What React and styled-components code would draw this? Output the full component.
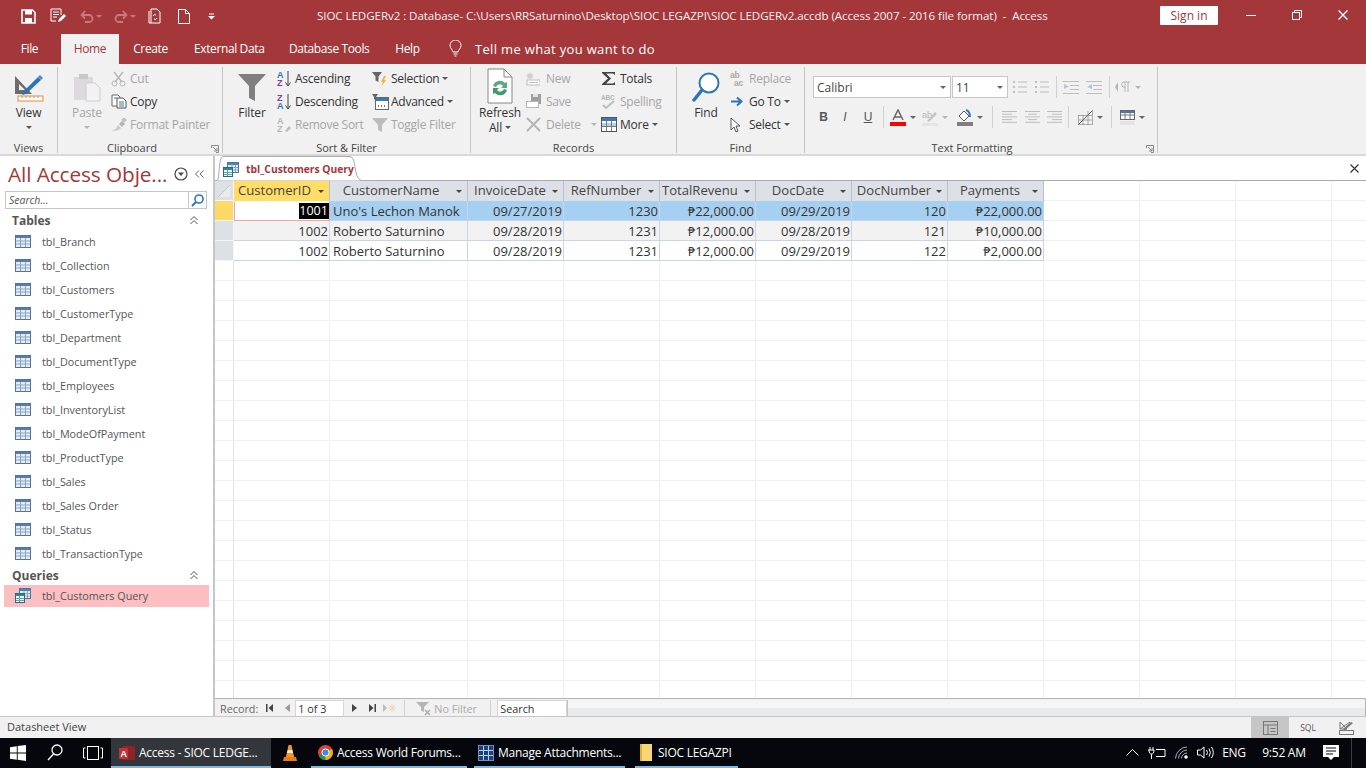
import React from 'react';
import styled, { createGlobalStyle } from 'styled-components';

const FONT = '"Open Sans", "Noto Sans", "Liberation Sans", sans-serif';
const RED = '#a4373a';

const Global = createGlobalStyle`
  html, body { margin: 0; padding: 0; background: #fff; }
  body { font-family: ${FONT}; font-size: 12px; color: #333; }
  * { box-sizing: border-box; }
  svg { display: block; flex: none; }
`;

const Page = styled.div`
  width: 1366px; height: 768px; overflow: hidden;
  display: flex; flex-direction: column;
`;

/* ---------- title bar ---------- */
const TitleBar = styled.div`
  height: 34px; background: ${RED}; color: #fff;
  display: flex; align-items: center; flex: none;
  padding-left: 21px;
`;
const QatSlot = styled.div`
  width: ${p => p.$w}px; display: flex; align-items: center; gap: 2px;
  padding-bottom: 2px;
`;
const TitleText = styled.div`
  width: 730px; margin-left: 99px; white-space: pre; font-size: 11.6px;
  padding-bottom: 3px; color: #f8eeee; letter-spacing: -0.08px;
`;
const SignIn = styled.div`
  width: 58px; height: 19px; margin-left: 113px; margin-bottom: 4px; background: #fff; color: ${RED};
  border-radius: 1px; font-size: 12px; text-align: center; line-height: 19px;
`;
const WinBtn = styled.div`
  width: 46px; display: flex; justify-content: center; padding-bottom: 4px;
  margin-left: ${p => p.$ml || 0}px;
`;

/* ---------- ribbon tabs ---------- */
const TabBar = styled.div`
  height: 30px; background: ${RED}; flex: none; display: flex; align-items: stretch;
  padding-left: 20px;
`;
const Tab = styled.div`
  width: ${p => p.$w}px; margin-left: ${p => p.$ml || 0}px;
  background: ${p => p.$active ? '#f1f1f1' : 'transparent'};
  color: ${p => p.$active ? RED : '#fff'};
  text-align: center; line-height: 29px; font-size: 12px; white-space: nowrap; letter-spacing: -0.38px;
`;
const TellMe = styled.div`
  display: flex; align-items: center; gap: 13px; margin-left: 29px; color: #fff; font-size: 13px;
  padding-bottom: 1px; letter-spacing: 0.33px;
`;

/* ---------- ribbon ---------- */
const Ribbon = styled.div`
  height: 92px; background: #f1f1f1; border-bottom: 2px solid #d8d8d8; flex: none;
  display: flex; padding-top: 3px;
`;
const Group = styled.div`
  width: ${p => p.$w}px; height: 86px; position: relative;
  border-right: 1px solid #c6c6c6;
  display: flex; flex-direction: column;
`;
const GroupBody = styled.div`
  flex: 1; display: flex; align-items: flex-start;
  padding-left: ${p => p.$pl || 0}px;
`;
const GroupLabel = styled.div`
  height: 11px; line-height: 11px; text-align: center; font-size: 11px; color: #444;
  padding-right: ${p => p.$pr || 0}px;
`;
const Launcher = styled.div`
  position: absolute; right: 3px; bottom: 0;
`;
const BigBtn = styled.div`
  width: ${p => p.$w}px; margin-right: ${p => p.$mr || 0}px; display: flex; flex-direction: column; align-items: center;
  color: ${p => p.$off ? '#a6a6a6' : '#333'}; font-size: 12px; line-height: 15px; letter-spacing: -0.15px;
`;
const BigIcon = styled.div`
  height: ${p => p.$h || 37}px; display: flex; align-items: center; justify-content: center;
  padding-top: ${p => p.$pt || 0}px;
`;
const Caret = styled.span`
  display: inline-block; width: 0; height: 0; border-left: 3px solid transparent; border-right: 3px solid transparent;
  border-top: 3px solid ${p => p.$off ? '#b5b5b5' : '#555'};
  margin-left: ${p => p.$ml ?? 3}px; vertical-align: middle;
`;
const CaretRow = styled.div`
  height: 15px; display: flex; align-items: center; justify-content: center;
`;
const SmallCol = styled.div`
  width: ${p => p.$w}px; display: flex; flex-direction: column; padding-top: 0;
`;
const SmallBtn = styled.div`
  height: 23px; display: flex; align-items: center; white-space: nowrap;
  color: ${p => p.$off ? '#a6a6a6' : '#333'}; font-size: 12px; letter-spacing: -0.25px;
`;
const SmallIcon = styled.div`
  width: ${p => p.$w || 19}px; display: flex; justify-content: flex-start;
`;

/* text formatting */
const FmtCol = styled.div`
  display: flex; flex-direction: column; padding-left: 8px; padding-top: 9px;
`;
const FmtRow = styled.div`
  height: 22px; display: flex; align-items: center; margin-bottom: ${p => p.$mb || 0}px;
`;
const Combo = styled.div`
  width: ${p => p.$w}px; height: 22px; background: #fff; border: 1px solid #c6c6c6;
  margin-right: 1px; display: flex; align-items: center; padding: 0 4px 0 3px;
  justify-content: space-between; font-size: 12px; color: #444;
`;
const FmtSep = styled.div`
  width: 1px; height: 22px; background: #d0d0d0; margin: 0 ${p => p.$mx ?? 5}px;
`;
const FmtBtn = styled.div`
  width: ${p => p.$w || 22}px; height: 22px; display: flex; align-items: center; justify-content: center;
  font-family: "Liberation Sans", sans-serif; font-size: 12px; color: #555;
  font-weight: ${p => p.$b ? 700 : 400}; font-style: ${p => p.$i ? 'italic' : 'normal'};
  text-decoration: ${p => p.$u ? 'underline' : 'none'};
  gap: 4px;
`;

/* ---------- main ---------- */
const Main = styled.div`
  flex: 1; display: flex; min-height: 0;
`;
const Nav = styled.div`
  width: 213px; flex: none; background: #fff; display: flex; flex-direction: column;
`;
const NavHead = styled.div`
  height: 35px; display: flex; align-items: center; padding-left: 8px; flex: none;
`;
const NavTitle = styled.div`
  width: 165px; font-size: 20.8px; color: ${RED}; white-space: nowrap; letter-spacing: -0.1px;
`;
const NavHeadIcon = styled.div`
  width: ${p => p.$w}px; display: flex; justify-content: center;
`;
const NavSearch = styled.div`
  height: 18px; margin: 0 6px 0 5px; flex: none; border: 1px solid #c6c6c6; display: flex;
  align-items: center; justify-content: space-between; font-style: italic; font-size: 10.5px;
  padding-left: 3px; color: #555;
`;
const NavSearchBtn = styled.div`
  width: 18px; height: 16px; border-left: 1px solid #c6c6c6; display: flex; align-items: center; justify-content: center;
`;
const NavSection = styled.div`
  height: ${p => p.$h || 22}px; padding: ${p => p.$pt || 0}px 15px 0 12px; display: flex; align-items: center; justify-content: space-between;
  font-weight: 700; font-size: 12px; color: #555; flex: none;
`;
const NavItem = styled.div`
  height: ${p => p.$h || 24}px; flex: none; display: flex; align-items: center; gap: 11px;
  padding: 0 0 2px 11px; margin: 0 4px 0 4px; font-size: 10.8px; color: #555;
  background: ${p => p.$active ? '#fcbfc1' : 'transparent'};
`;
const Divider = styled.div`
  width: 2px; flex: none; background: #c6c6c6;
`;
const Doc = styled.div`
  flex: 1; min-width: 0; display: flex; flex-direction: column; background: #fff;
`;
const DocTabs = styled.div`
  height: 25px; flex: none; display: flex; align-items: flex-end; justify-content: space-between;
  border-bottom: 1px solid #aaa; padding-left: 2px; position: relative;
`;
const DocTab = styled.div`
  height: 25px; width: 144px; display: flex; align-items: center; padding: 1px 0 0 6px;
  font-size: 10.3px; font-weight: 700; color: ${RED}; white-space: nowrap; position: relative;
  margin-bottom: -1px;
`;
const TabOutline = styled.svg`
  position: absolute; left: 0; top: 0;
`;
const TabInner = styled.div`
  position: relative; display: flex; align-items: center; gap: 7px;
`;
const DocClose = styled.div`
  width: 24px; height: 24px; display: flex; align-items: center; justify-content: center;
`;
const Sheet = styled.div`
  flex: 1; min-height: 0; position: relative; background-color: #fff;
  background-image:
    linear-gradient(to bottom, transparent 19px, #eef0f3 19px),
    linear-gradient(to right, transparent 18px, #dfe3ea 18px, #dfe3ea 19px, transparent 19px);
  background-size: 100% 20px, 100% 100%;
  background-position: 0 0, 0 0;
  background-repeat: repeat, no-repeat;
`;
const GridLines = styled.div`
  position: absolute; left: 0; top: 0; bottom: 0; right: 0; display: flex; padding-left: 19px; pointer-events: none;
`;
const GridLine = styled.div`
  width: ${p => p.$w}px; border-right: 1px solid #eef0f3; flex: none;
`;
const Rows = styled.div`
  position: relative; display: flex; flex-direction: column;
`;
const Row = styled.div`
  display: flex; height: ${p => p.$h || 20}px;
`;
const Selector = styled.div`
  width: 19px; flex: none; background: ${p => p.$active ? '#ffd966' : '#dde0e5'};
  border-right: 1px solid #f4f5f7; border-bottom: 1px solid #f4f5f7; position: relative;
  display: flex; align-items: center; justify-content: center;
`;
const HeadCell = styled.div`
  width: ${p => p.$w}px; flex: none; display: flex; align-items: center; position: relative;
  background: ${p => p.$active ? '#ffdd66' : '#dde0e6'};
  border-right: 1px solid #b9bfc9; font-size: 13.1px; color: #444; white-space: nowrap; overflow: hidden;
  padding-left: ${p => p.$pl ?? 3}px; padding-bottom: 3px;
`;
const HeadLabel = styled.div`
  width: ${p => p.$w}px; text-align: center; overflow: hidden;
`;
const HeadCaret = styled.span`
  position: absolute; right: 5px; top: 9px; width: 0; height: 0;
  border-left: 3px solid transparent; border-right: 3px solid transparent; border-top: 3px solid #444;
`;
const Cell = styled.div`
  width: ${p => p.$w}px; flex: none; display: flex; align-items: center;
  justify-content: ${p => p.$right ? 'flex-end' : 'flex-start'};
  padding: 0 1px 0 3px; white-space: nowrap; overflow: hidden; font-size: 13px; color: #333;
  background: ${p => p.$bg};
  border-right: 1px solid #c9d4e6; border-bottom: 1px solid #c9d4e6;
`;
const FocusCell = styled(Cell)`
  background: #fff; border: 1px solid #f6a5a7; border-top-color: transparent;
  padding-right: 0;
`;
const Picked = styled.span`
  background: #000; color: #fff; line-height: 16px; padding: 0 1px 0 0; font-size: 12.6px;
`;

/* record nav */
const RecordBar = styled.div`
  height: 18px; flex: none; display: flex; align-items: center; background: #f1f1f1;
  border-top: 1px solid #b4b4b4; border-right: 1px solid #b4b4b4; font-size: 10.8px; color: #666; padding-left: 5px;
  padding-top: 1px;
`;
const RecBtn = styled.div`
  width: ${p => p.$w || 16}px; display: flex; justify-content: center; flex: none;
`;
const RecInput = styled.div`
  width: 49px; height: 17px; background: #fff; border: 1px solid #d6d6d6; border-bottom: none; color: #333;
  padding: 0 0 0 2px; line-height: 16px; flex: none;
`;
const RecFilter = styled.div`
  width: 87px; height: 17px; display: flex; align-items: center; gap: 1px; padding-left: 11px; color: #aaa;
  border-left: 1px solid #d0d0d0; border-right: 1px solid #d0d0d0; margin: 0 6px 0 6px; flex: none;
`;
const RecSearch = styled(RecInput)`
  width: 70px; padding-left: 2px;
`;
const HScroll = styled.div`
  flex: 1; height: 16px; border-left: 1px solid #c0c0c0; background: linear-gradient(to bottom, #f4f5f6 50%, #e8eaec 50%);
`;

/* status */
const Status = styled.div`
  height: 22px; flex: none; background: #f1f1f1; display: flex; justify-content: space-between;
  align-items: stretch; padding-left: 7px; border-top: 1px solid #c6c6c6;
  font-size: 11px; color: #444;
`;
const StatusText = styled.div`
  line-height: 20px;
`;
const ViewBtns = styled.div`
  display: flex; margin-right: 1px;
`;
const ViewBtn = styled.div`
  width: 38px; display: flex; align-items: center; justify-content: center; font-size: 8.5px; color: #555;
  background: ${p => p.$active ? '#c6c6c6' : 'transparent'};
`;

/* taskbar */
const Taskbar = styled.div`
  height: 30px; flex: none; background: #05070d; display: flex; align-items: stretch; color: #fff; font-size: 12px;
  letter-spacing: -0.25px;
`;
const TaskIcon = styled.div`
  width: ${p => p.$w}px; display: flex; align-items: center; justify-content: center; flex: none; padding-bottom: 1px;
`;
const TaskApp = styled.div`
  width: ${p => p.$w}px; flex: none; display: flex; align-items: center;
  gap: ${p => p.$gap || 4}px; padding-left: ${p => p.$pl || 8}px; white-space: nowrap; position: relative;
  background: ${p => p.$active ? '#33363b' : 'transparent'}; padding-bottom: 1px; overflow: hidden;
  &::after { content: ''; position: absolute; left: ${p => p.$line || 0}px; right: 0; bottom: 0; height: 2px; background: #76b9ed; }
`;
const Tray = styled.div`
  margin-left: auto; display: flex; align-items: center; padding-bottom: 1px;
`;
const TrayText = styled.div`
  width: ${p => p.$w}px; text-align: center; font-size: 12px; white-space: nowrap;
`;
const TrayIcon = styled.div`
  width: ${p => p.$w}px; display: flex; justify-content: center;
`;
const TrayEdge = styled.div`
  width: 15px; height: 30px; margin-left: 5px; margin-bottom: -1px; border-left: 1px solid #3a3c42;
`;

/* ---------- icons ---------- */
const Ic = ({ w = 16, h = 16, children }) => <svg width={w} height={h} viewBox={`0 0 ${w} ${h}`} fill="none">{children}</svg>;

const SaveI = () => <Ic w={15} h={15}><path d="M1 1h10.500L14 3.500V14H1z" stroke="#fff" strokeWidth="1.600" /><rect x="4" y="1" width="7" height="4.500" fill="#fff" /><rect x="4" y="9" width="7" height="5" fill="#fff" /></Ic>;
const EditDocI = () => <Ic w={17} h={16}><path d="M1 1h10v6M1 1v12h5" stroke="#fff" /><path d="M3 4h6M3 6.500h6M3 9h4" stroke="#fff" /><path d="M8 14l1-3 5-5 2 2-5 5z" fill="#fff" /></Ic>;
const UndoI = () => <Ic w={14} h={14}><path d="M2 6h7a3.500 3.500 0 010 7H5M5 2L1.500 6 5 9.500" stroke="#c87a7c" strokeWidth="1.800" /></Ic>;
const RedoI = () => <Ic w={14} h={14}><path d="M12 6H5a3.500 3.500 0 000 7h4M9 2l3.500 4L9 9.500" stroke="#c87a7c" strokeWidth="1.800" /></Ic>;
const MiniCaret = ({ c = '#c87a7c' }) => <Ic w={6} h={3}><path d="M0 0h6L3 3z" fill={c} /></Ic>;
const PrintI = () => <Ic w={13} h={16}><path d="M3 1h6l3 3v11H3zM1 3v12h2" stroke="#fff" /><path d="M5 8a2 2 0 013-1M9 10a2 2 0 01-3 1" stroke="#fff" /></Ic>;
const NewI = () => <Ic w={12} h={15}><path d="M.5.5h7l4 4v10H.5zM7.500.5v4h4" stroke="#fff" /></Ic>;
const QatMore = () => <Ic w={7} h={7}><path d="M1 1h5" stroke="#fff" /><path d="M0 3h7L3.500 6.500z" fill="#fff" /></Ic>;

const BulbI = () => <Ic w={13} h={17}><path d="M4 12c0-2-3-3.500-3-6.500a5.500 5.500 0 0111 0C12 8.500 9 10 9 12zM4.500 14h4M5.500 16h2" stroke="#fff" /></Ic>;

const ViewI = () => <Ic w={30} h={30}>
  <path d="M1 4v18h17z M5 12v6h6z" fill="#6d6d6d" fillRule="evenodd" />
  <path d="M9 20L24 5l3 3L12 22l-4 1z" fill="#2e75b6" /><path d="M24 5l2-2 3 3-2 2z" fill="#4a90d0" />
  <rect x="4" y="24" width="25" height="5" fill="#fff" stroke="#e8893a" /><path d="M8 24v2M12 24v2M16 24v2M20 24v2M24 24v2" stroke="#e8893a" />
</Ic>;
const PasteI = () => <Ic w={29} h={30}>
  <rect x="1" y="5" width="19" height="23" fill="#dcdadc" /><rect x="6" y="2" width="9" height="5" fill="#c9c7c9" />
  <path d="M13 11h9l5 5v13H13z" fill="#f3f1f3" stroke="#cfcdcf" />
</Ic>;
const CutI = () => <Ic w={16} h={16}><path d="M3 1l8 10M12 1L4 11" stroke="#b5b5b5" strokeWidth="1.400" /><circle cx="3.500" cy="12.500" r="2.500" stroke="#b5b5b5" /><circle cx="11.500" cy="12.500" r="2.500" stroke="#b5b5b5" /></Ic>;
const CopyI = () => <Ic w={16} h={15}><path d="M1 1h6l2 2v9H1z" fill="#fff" stroke="#666" /><path d="M6 4h6l3 3v7H6z" fill="#fff" stroke="#555" /><path d="M3 4h3M8 8h5M8 10h5M8 12h5" stroke="#3c78b5" /></Ic>;
const PainterI = () => <Ic w={16} h={14}><path d="M1 12c3 0 5-2 6-5l3 3c-2 2-5 4-9 2z" fill="#c9c9c9" /><path d="M8 6l3-3 3 3-3 3z" fill="#b5b5b5" /><rect x="11" y="0" width="4" height="4" fill="#c0c0c0" transform="rotate(45 13 2)" /></Ic>;
const FilterBig = () => <Ic w={28} h={28}><path d="M0 1h28L17 13v15l-6-3V13z" fill="#7f7f7f" /></Ic>;
const SortI = ({ first, second, c1, c2, off }) => (
  <Ic w={16} h={17}>
    <text x="0" y="8" fontSize="9" fontWeight="700" fontFamily="Liberation Sans" fill={c1}>{first}</text>
    <text x="0" y="16" fontSize="9" fontWeight="700" fontFamily="Liberation Sans" fill={c2}>{second}</text>
    {off ? <path d="M8 15l4-5 2 2-4 4z" fill="#bbb" /> : <path d="M11 1v14M8.500 12.500L11 16l2.500-3.500" stroke="#444" />}
  </Ic>
);
const SelectionI = () => <Ic w={18} h={16}><path d="M0 1h10L6.500 5.500V11l-3-1.500V5.500z" fill="#666" /><path d="M12 5l-3 6h2l-2 5 5-7h-2l2-4z" fill="#f2b233" /></Ic>;
const AdvancedI = () => <Ic w={17} h={16}><path d="M0 0h6L4 3v3L2 5V3z" fill="#666" /><rect x="3.500" y="3.500" width="13" height="12" fill="#fff" stroke="#666" /><rect x="4" y="4" width="12" height="3" fill="#3c78b5" /><path d="M6 12h1M9 12h1M12 12h1" stroke="#444" strokeWidth="1.400" /></Ic>;
const ToggleI = () => <Ic w={16} h={15}><path d="M0 1h16L10 8v7l-4-2V8z" fill="#bcbcbc" /></Ic>;
const RefreshI = () => <Ic w={26} h={36}><path d="M1 1h16l8 8v26H1z" fill="#fff" stroke="#888" /><path d="M17 1v8h8" stroke="#888" /><path d="M6 18a7 7 0 0112-3l2-1v6h-6l2-2a4 4 0 00-7 1z" fill="#5fa58a" /><path d="M20 22a7 7 0 01-12 3l-2 1v-6h6l-2 2a4 4 0 007-1z" fill="#3f9a6e" /></Ic>;
const NewRecI = () => <Ic w={14} h={14}><path d="M4 0l1 2 2-1-1 2 2 1-2 1 1 2-2-1-1 2-1-2-2 1 1-2-2-1 2-1-1-2 2 1z" fill="#cfcfcf" /><rect x="1" y="8" width="13" height="5" fill="#fff" stroke="#bcbcbc" /><rect x="3" y="10" width="9" height="1" fill="#bcbcbc" /></Ic>;
const SaveRecI = () => <Ic w={16} h={15}><rect x="5" y="0" width="10" height="10" fill="#9f9f9f" /><rect x="7" y="0" width="5" height="3" fill="#e5e5e5" /><rect x=".5" y="7.500" width="12" height="6" fill="#fff" stroke="#b5b5b5" /></Ic>;
const DeleteI = () => <Ic w={15} h={15}><path d="M1 1l13 13M14 1L1 14" stroke="#b5b5b5" strokeWidth="2" /></Ic>;
const TotalsI = () => <Ic w={16} h={15}><path d="M1 1h13v3l-2-1.500H5l5 5-5 5h7l2-1.500v3H1v-1l6-5.500L1 2z" fill="#444" /></Ic>;
const SpellI = () => <Ic w={16} h={16}><text x="0" y="6" fontSize="6.500" fontWeight="700" fontFamily="Liberation Sans" fill="#b5b5b5">ABC</text><path d="M2 11l3 3 8-7" stroke="#bdbdbd" strokeWidth="2" /></Ic>;
const MoreI = () => <Ic w={16} h={15}><rect x=".5" y=".5" width="15" height="14" fill="#fff" stroke="#555" /><rect x="1" y="1" width="14" height="3" fill="#3c78b5" /><rect x="1" y="6" width="14" height="3" fill="#b5cfe6" /><path d="M1 9.500h14M5.500 4v10M10.500 4v10" stroke="#777" /></Ic>;
const FindI = () => <Ic w={28} h={30}><circle cx="17" cy="11" r="9.500" stroke="#2e75b6" strokeWidth="2" fill="#fff" /><path d="M10 18L2 28" stroke="#2e75b6" strokeWidth="3.500" strokeLinecap="round" /></Ic>;
const ReplaceI = () => <Ic w={17} h={16}><text x="0" y="7" fontSize="8.500" fontFamily="Liberation Sans" fontWeight="700" fill="#a9a9a9">ab</text><text x="4" y="15" fontSize="8.500" fontFamily="Liberation Sans" fontWeight="700" fill="#a9a9a9">ac</text></Ic>;
const GoToI = () => <Ic w={14} h={11}><path d="M1 5.500h10M7 1.500l4.500 4-4.500 4" stroke="#2e75b6" strokeWidth="2" /></Ic>;
const SelectI = () => <Ic w={12} h={16}><path d="M1 1v12l3-3 2 5 2-1-2-5h4z" fill="#fff" stroke="#555" /></Ic>;
const LauncherI = () => <Ic w={8} h={8}><path d="M.5 3V.5h7v7H5" stroke="#888" /><path d="M2 2l4 4M3 6h3V3" stroke="#888" /></Ic>;
const ListI = ({ num }) => <Ic w={15} h={14}>
  {[2, 7, 12].map(y => <g key={y}><path d={`M6 ${y}h9`} stroke="#bdbdbd" />{num ? <path d={`M1 ${y - 1}h2v2H1z`} fill="#bdbdbd" /> : <circle cx="2" cy={y} r="1.300" fill="#c4c4c4" />}</g>)}
</Ic>;
const IndentI = ({ rev }) => <Ic w={16} h={13}>
  <path d="M0 .5h16M7 4.500h9M7 8.500h9M0 12.500h16" stroke="#bdbdbd" />
  {rev ? <path d="M6 3v5L1 6z" fill="#b5c6d8" /> : <path d="M1 3v5l5-2.500z" fill="#b5c6d8" />}
</Ic>;
const ParaI = () => <Ic w={16} h={12}><path d="M3 1v10L0 6z" fill="#b5b5b5" /><path d="M8 1h7M10 1v10M13 1v10M8 1a3 3 0 000 5h2" stroke="#b5b5b5" /></Ic>;
const FontColorI = () => <Ic w={16} h={17}><path d="M3 11L8 1l5 10M5 8h6" stroke="#666" strokeWidth="1.500" /><rect x="0" y="13" width="16" height="4" fill="#f00" /></Ic>;
const HighlightI = () => <Ic w={16} h={17}><text x="0" y="9" fontSize="9" fontFamily="Liberation Sans" fill="#b5b5b5">ab</text><path d="M5 12l8-9 2 2-8 8z" fill="#c4c4c4" /><rect x="0" y="14" width="16" height="3" fill="#e5e5e5" /></Ic>;
const FillI = () => <Ic w={16} h={17}><path d="M2 7l5-5 5 5-5 5z" fill="#fff" stroke="#555" /><path d="M9 1c3 1 4 4 4 7" stroke="#3c78b5" strokeWidth="2" /><rect x="0" y="13" width="16" height="4" fill="#7f7f7f" /></Ic>;
const AlignI = ({ a }) => {
  const pts = a === 'l' ? [[0, 15], [0, 10], [0, 15], [0, 10], [0, 15]] : a === 'c' ? [[0, 15], [3, 12], [0, 15], [3, 12], [0, 15]] : [[0, 15], [5, 15], [0, 15], [5, 15], [0, 15]];
  return <Ic w={15} h={12}>{pts.map((p, i) => <path key={i} d={`M${p[0]} ${i * 2.7 + .5}H${p[1]}`} stroke="#bdbdbd" />)}</Ic>;
};
const GridlinesI = () => <Ic w={15} h={15}><path d="M.5 14.500h14v-14M.5 14.500v-9M5 14.500v-9M10 14.500v-14M.5 10h14M.5 5.500h14" stroke="#666" strokeDasharray="1 1" /><path d="M.5 14.500L14.500.5" stroke="#666" /></Ic>;
const AltRowI = () => <Ic w={15} h={15}><rect x=".5" y=".5" width="14" height="9" fill="#fff" stroke="#666" /><rect x="1" y="1" width="13" height="2" fill="#3c78b5" /><path d="M.5 5h14M5 .5v9M10 .5v9" stroke="#777" /><rect x="0" y="11" width="15" height="4" fill="#e3e3e3" /></Ic>;

const NavDown = () => <Ic w={14} h={14}><circle cx="7" cy="7" r="6" stroke="#444" strokeWidth="1.200" /><path d="M4 5.500h6L7 9z" fill="#444" /></Ic>;
const NavCollapse = () => <Ic w={9} h={8}><path d="M4 .5L.5 4 4 7.500M8.500.5L5 4l3.500 3.500" stroke="#666" /></Ic>;
const SearchI = () => <Ic w={13} h={13}><circle cx="8" cy="5" r="4" stroke="#2e75b6" strokeWidth="1.600" /><path d="M5 8l-4 4" stroke="#2e75b6" strokeWidth="2" /></Ic>;
const ChevUp = () => <Ic w={8} h={9}><path d="M.5 4L4 .5 7.500 4M.5 8L4 4.500 7.500 8" stroke="#555" /></Ic>;
const TableI = () => <Ic w={16} h={13}><rect x=".5" y=".5" width="15" height="12" fill="#e5edf6" stroke="#55749c" /><rect x="1" y="1" width="14" height="2" fill="#5a7da8" /><path d="M1 6h14M1 9h14M5.500 3v9M10.500 3v9" stroke="#88a3c4" /></Ic>;
const QueryI = () => <Ic w={16} h={15}>
  <rect x="4.500" y=".5" width="11" height="10" fill="#e5edf6" stroke="#55749c" /><rect x="5" y="1" width="10" height="2" fill="#4f81bd" /><path d="M5 5.500h10M5 8h10M9 3v7M12.500 3v7" stroke="#88a3c4" />
  <rect x=".5" y="5.500" width="9" height="9" fill="#fff" stroke="#1f6f7f" /><rect x="1" y="6" width="8" height="2" fill="#1f8fa0" /><path d="M1 10.500h8M1 12.500h8M4.500 8v6" stroke="#5aa5b5" />
</Ic>;
const CloseSm = ({ c = '#333', s = 9 }) => <svg width={s} height={s} viewBox="0 0 9 9"><path d="M.5.5l8 8M8.500.5l-8 8" stroke={c} strokeWidth="1.200" /></svg>;
const CornerI = () => <Ic w={14} h={14}><path d="M1 13L13 1v12z" fill="#e9ebef" /><path d="M1 13L13 1" stroke="#c5c9d1" /></Ic>;
const RecFirst = ({ c = '#444' }) => <Ic w={7} h={8}><path d="M0 0h1.500v8H0zM7 0v8L2.500 4z" fill={c} /></Ic>;
const RecPrev = ({ c = '#999' }) => <Ic w={5} h={8}><path d="M5 0v8L0 4z" fill={c} /></Ic>;
const RecNext = ({ c = '#444' }) => <Ic w={5} h={8}><path d="M0 0v8l5-4z" fill={c} /></Ic>;
const RecLast = ({ c = '#444' }) => <Ic w={7} h={8}><path d="M7 0H5.500v8H7zM0 0v8l4.500-4z" fill={c} /></Ic>;
const RecNew = () => <Ic w={13} h={8}><path d="M0 0v8l4-4z" fill="#bbb" /><path d="M9 0v8M5 4h8M6 1l6 6M12 1L6 7" stroke="#eed9a8" /></Ic>;
const NoFilterI = () => <Ic w={17} h={15}><path d="M0 1h13L8 6v5L5 9.500V6z" fill="#b5b5b5" /><path d="M9 9l5 5M14 9l-5 5" stroke="#aaa" strokeWidth="1.500" /></Ic>;

const DsView = () => <Ic w={15} h={14}><rect x=".5" y=".5" width="14" height="13" stroke="#777" /><path d="M.5 4h14M5 4v10M7.500 7.500h5M7.500 10.500h5" stroke="#777" /></Ic>;
const DesignView = () => <Ic w={15} h={14}><path d="M1 1v7h7zM1 8l10-7" stroke="#777" /><path d="M4 8l8-7 2 1-8 7z" fill="#777" /><rect x=".5" y="9.500" width="14" height="4" stroke="#777" /></Ic>;

const WinLogo = () => <Ic w={16} h={16}><path d="M0 2.200l6.800-1v6.300H0zM7.700 1l8.300-1v7.500H7.700zM0 8.500h6.800v6.300l-6.800-1zM7.700 8.500H16V16l-8.300-1.200z" fill="#fff" /></Ic>;
const SearchTb = () => <Ic w={16} h={17}><circle cx="10" cy="6" r="5" stroke="#fff" strokeWidth="1.300" /><path d="M6.500 10L1 16" stroke="#fff" strokeWidth="1.300" /></Ic>;
const TaskView = () => <Ic w={20} h={14}><rect x="4.500" y=".5" width="11" height="13" stroke="#fff" /><path d="M2.500 2H.5v10h2M17.500 2h2v10h-2" stroke="#fff" /></Ic>;
const AccessI = () => <Ic w={16} h={16}><rect x="3" y="1" width="13" height="14" rx="1" fill="#8f2428" /><rect x="0" y="3" width="9" height="11" fill="#c0323a" /><text x="1.500" y="12" fontSize="9" fontWeight="700" fontFamily="Liberation Sans" fill="#fff">A</text></Ic>;
const VlcI = () => <Ic w={14} h={18}><path d="M5.500 1h3l1 5h-5z" fill="#f7931e" /><path d="M4.500 6h5l.7 3H3.800z" fill="#eee" /><path d="M3.800 9h6.400l1 4H2.800z" fill="#f7931e" /><path d="M1 13h12l1 4H0z" fill="#ea7d11" /></Ic>;
const ChromeI = () => <Ic w={15} h={15}><circle cx="7.500" cy="7.500" r="7.500" fill="#db4437" /><path d="M7.500 7.500L.9 11.200A7.500 7.500 0 007.500 15z" fill="#0f9d58" /><path d="M7.500 7.500V15a7.500 7.500 0 006.500-11z" fill="#f4b400" /><circle cx="7.500" cy="7.500" r="3.600" fill="#4285f4" stroke="#fff" /></Ic>;
const AttachI = () => <Ic w={16} h={16}><rect x=".5" y=".5" width="15" height="15" fill="#1f3f77" stroke="#6f8fbf" /><path d="M5.500 1v14M10.500 1v14M1 5.500h14M1 10.500h14" stroke="#b6cff0" /></Ic>;
const FolderI = () => <Ic w={12} h={17}><rect x="0" y="0" width="12" height="17" fill="#f7d774" /><rect x="0" y="0" width="2" height="17" fill="#e0b23c" /></Ic>;
const Up = () => <Ic w={13} h={7}><path d="M.5 6.500l6-6 6 6" stroke="#fff" /></Ic>;
const Battery = () => <Ic w={18} h={12}><path d="M8 2.500h9v7H8" stroke="#fff" /><path d="M0 3h6M2 0v3M5 0v3M1 3c0 3 1 4 2.500 4S6 6 6 3M3.500 7v5" stroke="#fff" /></Ic>;
const Wifi = () => <Ic w={15} h={13}><path d="M.5 12.500A12 12 0 0112 1M3.500 12.500A9 9 0 0112 4M6.500 12.500A6 6 0 0112 7" stroke="#aab" /><circle cx="11" cy="11" r="1.800" fill="#fff" /></Ic>;
const Speaker = () => <Ic w={17} h={13}><path d="M.5 4h3L7 1v11L3.500 9h-3z" stroke="#fff" /><path d="M9.500 4a4 4 0 010 5M12 2.500a7 7 0 010 8M14.500 1a10 10 0 010 11" stroke="#fff" /></Ic>;
const Notify = () => <Ic w={16} h={16}><path d="M0 0h16v12h-5l-3 3-3-3H0z" fill="#fff" /><path d="M3 3h10M3 6h10M3 9h7" stroke="#05070d" /></Ic>;

/* ---------- data ---------- */
const COLS = [
  { name: 'CustomerID', w: 96, lw: 75, active: true },
  { name: 'CustomerName', w: 138, lw: 116 },
  { name: 'InvoiceDate', w: 96, lw: 78 },
  { name: 'RefNumber', w: 96, lw: 78 },
  { name: 'TotalRevenue', w: 96, lw: 76, pl: 2 },
  { name: 'DocDate', w: 96, lw: 78 },
  { name: 'DocNumber', w: 96, lw: 78 },
  { name: 'Payments', w: 96, lw: 78 },
];
const ROWS = [
  ['1002', 'Roberto Saturnino', '09/28/2019', '1231', '₱12,000.00', '09/28/2019', '121', '₱10,000.00'],
  ['1002', 'Roberto Saturnino', '09/28/2019', '1231', '₱12,000.00', '09/29/2019', '122', '₱2,000.00'],
];
const FIRST = ["Uno's Lechon Manok", '09/27/2019', '1230', '₱22,000.00', '09/29/2019', '120', '₱22,000.00'];
const TABLES = ['tbl_Branch', 'tbl_Collection', 'tbl_Customers', 'tbl_CustomerType', 'tbl_Department', 'tbl_DocumentType', 'tbl_Employees', 'tbl_InventoryList', 'tbl_ModeOfPayment', 'tbl_ProductType', 'tbl_Sales', 'tbl_Sales Order', 'tbl_Status', 'tbl_TransactionType'];

const SB = ({ icon, label, off, caret, iw }) => (
  <SmallBtn $off={off}><SmallIcon $w={iw}>{icon}</SmallIcon>{label}{caret && <Caret $off={off} />}</SmallBtn>
);

export default function App() {
  return (
    <Page>
      <Global />
      <TitleBar>
        <QatSlot $w={29}><SaveI /></QatSlot>
        <QatSlot $w={30}><EditDocI /></QatSlot>
        <QatSlot $w={34}><UndoI /><MiniCaret /></QatSlot>
        <QatSlot $w={34}><RedoI /><MiniCaret /></QatSlot>
        <QatSlot $w={30}><PrintI /></QatSlot>
        <QatSlot $w={30}><NewI /></QatSlot>
        <QatSlot $w={10}><QatMore /></QatSlot>
        <TitleText>SIOC LEDGERv2 : Database- C:\Users\RRSaturnino\Desktop\SIOC LEGAZPI\SIOC LEDGERv2.accdb (Access 2007 - 2016 file format)  -  Access</TitleText>
        <SignIn>Sign in</SignIn>
        <WinBtn $ml={10}><svg width="10" height="1"><rect width="10" height="1" fill="#fff" /></svg></WinBtn>
        <WinBtn><Ic w={10} h={10}><path d="M2.500 2V.5h7v7H8" stroke="#fff" /><rect x=".5" y="2.500" width="7" height="7" stroke="#fff" /></Ic></WinBtn>
        <WinBtn><CloseSm c="#fff" s={10} /></WinBtn>
      </TitleBar>
      <TabBar>
        <Tab $w={19}>File</Tab>
        <Tab $w={58} $ml={22} $active>Home</Tab>
        <Tab $w={35} $ml={14}>Create</Tab>
        <Tab $w={68} $ml={26}>External Data</Tab>
        <Tab $w={79} $ml={27}>Database Tools</Tab>
        <Tab $w={25} $ml={27}>Help</Tab>
        <TellMe><BulbI />Tell me what you want to do</TellMe>
      </TabBar>

      <Ribbon>
        <Group $w={58}>
          <GroupBody>
            <BigBtn $w={57}>
              <BigIcon $h={38} $pt={1}><ViewI /></BigIcon>
              View
              <CaretRow><Caret $ml={0} /></CaretRow>
            </BigBtn>
          </GroupBody>
          <GroupLabel>Views</GroupLabel>
        </Group>
        <Group $w={165}>
          <GroupBody $pl={14}>
            <BigBtn $w={30} $off $mr={9}>
              <BigIcon $h={38} $pt={1}><PasteI /></BigIcon>
              Paste
              <CaretRow><Caret $ml={0} $off /></CaretRow>
            </BigBtn>
            <SmallCol $w={110}>
              <SB off icon={<CutI />} label="Cut" />
              <SB icon={<CopyI />} label="Copy" />
              <SB off icon={<PainterI />} label="Format Painter" />
            </SmallCol>
          </GroupBody>
          <GroupLabel $pr={16}>Clipboard</GroupLabel>
          <Launcher><LauncherI /></Launcher>
        </Group>
        <Group $w={248}>
          <GroupBody $pl={14}>
            <BigBtn $w={30} $mr={10}>
              <BigIcon $h={38} $pt={2}><FilterBig /></BigIcon>
              Filter
            </BigBtn>
            <SmallCol $w={95}>
              <SB icon={<SortI first="A" second="Z" c1="#2e75b6" c2="#7b3fa0" />} iw={18} label="Ascending" />
              <SB icon={<SortI first="Z" second="A" c1="#7b3fa0" c2="#2e75b6" />} iw={18} label="Descending" />
              <SB off icon={<SortI first="A" second="Z" c1="#b5b5b5" c2="#b5b5b5" off />} iw={18} label="Remove Sort" />
            </SmallCol>
            <SmallCol $w={95}>
              <SB icon={<SelectionI />} label="Selection" caret />
              <SB icon={<AdvancedI />} label="Advanced" caret />
              <SB off icon={<ToggleI />} label="Toggle Filter" />
            </SmallCol>
          </GroupBody>
          <GroupLabel>Sort &amp; Filter</GroupLabel>
        </Group>
        <Group $w={206}>
          <GroupBody $pl={10}>
            <BigBtn $w={38} $mr={7}>
              <BigIcon $h={38}><RefreshI /></BigIcon>
              Refresh
              <CaretRow>All<Caret /></CaretRow>
            </BigBtn>
            <SmallCol $w={75}>
              <SB off icon={<NewRecI />} label="New" iw={20} />
              <SB off icon={<SaveRecI />} label="Save" iw={20} />
              <SmallBtn $off><SmallIcon $w={20}><DeleteI /></SmallIcon>Delete<Caret $off $ml={10} /></SmallBtn>
            </SmallCol>
            <SmallCol $w={70}>
              <SB icon={<TotalsI />} label="Totals" />
              <SB off icon={<SpellI />} label="Spelling" />
              <SB icon={<MoreI />} label="More" caret />
            </SmallCol>
          </GroupBody>
          <GroupLabel>Records</GroupLabel>
        </Group>
        <Group $w={128}>
          <GroupBody $pl={10}>
            <BigBtn $w={38} $mr={5}>
              <BigIcon $h={38} $pt={1}><FindI /></BigIcon>
              Find
            </BigBtn>
            <SmallCol $w={70}>
              <SB off icon={<ReplaceI />} label="Replace" />
              <SB icon={<GoToI />} label="Go To" caret />
              <SB icon={<SelectI />} label="Select" caret />
            </SmallCol>
          </GroupBody>
          <GroupLabel>Find</GroupLabel>
        </Group>
        <Group $w={353}>
          <GroupBody>
            <FmtCol>
              <FmtRow $mb={8}>
                <Combo $w={138}>Calibri<MiniCaret c="#666" /></Combo>
                <Combo $w={56}>11<MiniCaret c="#666" /></Combo>
                <FmtBtn $w={20}><ListI /></FmtBtn>
                <FmtBtn $w={24}><ListI num /></FmtBtn>
                <FmtSep $mx={3} />
                <FmtBtn $w={22}><IndentI /></FmtBtn>
                <FmtBtn $w={24}><IndentI rev /></FmtBtn>
                <FmtSep $mx={3} />
                <FmtBtn $w={30}><ParaI /><MiniCaret c="#b5b5b5" /></FmtBtn>
              </FmtRow>
              <FmtRow>
                <FmtBtn $b $w={21}>B</FmtBtn>
                <FmtBtn $i $w={22}>I</FmtBtn>
                <FmtBtn $u $w={24}>U</FmtBtn>
                <FmtSep $mx={3} />
                <FmtBtn $w={31}><FontColorI /><MiniCaret c="#666" /></FmtBtn>
                <FmtBtn $w={34}><HighlightI /><MiniCaret c="#b5b5b5" /></FmtBtn>
                <FmtBtn $w={35}><FillI /><MiniCaret c="#666" /></FmtBtn>
                <FmtSep $mx={5} />
                <FmtBtn $w={23}><AlignI a="l" /></FmtBtn>
                <FmtBtn $w={22}><AlignI a="c" /></FmtBtn>
                <FmtBtn $w={22}><AlignI a="r" /></FmtBtn>
                <FmtSep $mx={3} />
                <FmtBtn $w={36}><GridlinesI /><MiniCaret c="#666" /></FmtBtn>
                <FmtSep $mx={3} />
                <FmtBtn $w={35}><AltRowI /><MiniCaret c="#666" /></FmtBtn>
              </FmtRow>
            </FmtCol>
          </GroupBody>
          <GroupLabel $pr={18}>Text Formatting</GroupLabel>
          <Launcher><LauncherI /></Launcher>
        </Group>
      </Ribbon>

      <Main>
        <Nav>
          <NavHead>
            <NavTitle>All Access Obje...</NavTitle>
            <NavHeadIcon $w={16}><NavDown /></NavHeadIcon>
            <NavHeadIcon $w={20}><NavCollapse /></NavHeadIcon>
          </NavHead>
          <NavSearch>Search...<NavSearchBtn><SearchI /></NavSearchBtn></NavSearch>
          <NavSection $h={21} $pt={1}>Tables<ChevUp /></NavSection>
          {TABLES.map(t => <NavItem key={t}><TableI />{t}</NavItem>)}
          <NavSection $h={19}>Queries<ChevUp /></NavSection>
          <NavItem $active $h={22}><QueryI />tbl_Customers Query</NavItem>
        </Nav>
        <Divider />
        <Doc>
          <DocTabs>
            <DocTab>
              <TabOutline width="144" height="25" viewBox="0 0 144 25" fill="none">
                <path d="M0 24.500C3 24 1 1 6 .5H133C140 1 136 22 144 24.500" stroke="#aaa" fill="#fff" />
              </TabOutline>
              <TabInner><QueryI />tbl_Customers Query</TabInner>
            </DocTab>
            <DocClose><CloseSm /></DocClose>
          </DocTabs>
          <Sheet>
            <GridLines>
              {COLS.map(c => <GridLine key={c.name} $w={c.w} />)}
              <GridLine $w={96} /><GridLine $w={96} /><GridLine $w={96} />
            </GridLines>
            <Rows>
              <Row>
                <Selector><CornerI /></Selector>
                {COLS.map(c => (
                  <HeadCell key={c.name} $w={c.w} $active={c.active} $pl={c.pl}>
                    <HeadLabel $w={c.lw}>{c.name}</HeadLabel><HeadCaret />
                  </HeadCell>
                ))}
              </Row>
              <Row>
                <Selector $active />
                <FocusCell $w={96} $right><Picked>1001</Picked></FocusCell>
                {FIRST.map((v, i) => <Cell key={i} $w={COLS[i + 1].w} $right={i > 0} $bg="#a6d0f1">{v}</Cell>)}
              </Row>
              {ROWS.map((r, ri) => (
                <Row key={ri}>
                  <Selector />
                  {r.map((v, i) => <Cell key={i} $w={COLS[i].w} $right={i !== 1} $bg={ri === 0 ? '#f2f2f2' : '#fff'}>{v}</Cell>)}
                </Row>
              ))}
            </Rows>
          </Sheet>
          <RecordBar>
            Record:
            <RecBtn $w={22}><RecFirst /></RecBtn>
            <RecBtn $w={15}><RecPrev /></RecBtn>
            <RecInput>1 of 3</RecInput>
            <RecBtn $w={20}><RecNext /></RecBtn>
            <RecBtn $w={16}><RecLast /></RecBtn>
            <RecBtn $w={18}><RecNew /></RecBtn>
            <RecFilter><NoFilterI />No Filter</RecFilter>
            <RecSearch>Search</RecSearch>
            <HScroll />
          </RecordBar>
        </Doc>
      </Main>

      <Status>
        <StatusText>Datasheet View</StatusText>
        <ViewBtns>
          <ViewBtn $active><DsView /></ViewBtn>
          <ViewBtn>SQL</ViewBtn>
          <ViewBtn><DesignView /></ViewBtn>
        </ViewBtns>
      </Status>

      <Taskbar>
        <TaskIcon $w={36}><WinLogo /></TaskIcon>
        <TaskIcon $w={38}><SearchTb /></TaskIcon>
        <TaskIcon $w={37}><TaskView /></TaskIcon>
        <TaskApp $w={160} $active><AccessI />Access - SIOC LEDGE...</TaskApp>
        <TaskIcon $w={38}><VlcI /></TaskIcon>
        <TaskApp $w={158} $pl={9} $line={2}><ChromeI />Access World Forums...</TaskApp>
        <TaskApp $w={158} $pl={11} $line={7}><AttachI />Manage Attachments...</TaskApp>
        <TaskApp $w={113} $pl={15} $gap={6} $line={10}><FolderI />SIOC LEGAZPI</TaskApp>
        <Tray>
          <TrayIcon $w={24}><Up /></TrayIcon>
          <TrayIcon $w={26}><Battery /></TrayIcon>
          <TrayIcon $w={24}><Wifi /></TrayIcon>
          <TrayIcon $w={22}><Speaker /></TrayIcon>
          <TrayText $w={36}>ENG</TrayText>
          <TrayText $w={64}>9:52 AM</TrayText>
          <TrayIcon $w={30}><Notify /></TrayIcon>
          <TrayEdge />
        </Tray>
      </Taskbar>
    </Page>
  );
}
